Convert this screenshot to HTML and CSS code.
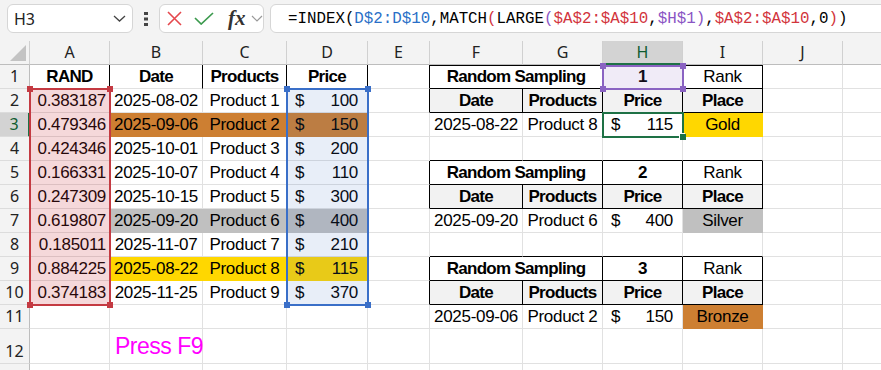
FILE: index.html
```html
<!DOCTYPE html>
<html lang="en">
<head>
    <meta charset="UTF-8">
    <title>Random Sampling</title>
    <link rel="stylesheet" href="styles.css">
</head>
<body>
    <div class="toolbar">
        <div class="namebox">
            <span>H3</span>
            <svg width="13" height="7" viewBox="0 0 13 7"><path d="M1 1l5.5 5 5.5-5" fill="none" stroke="#444" stroke-width="1.3"/></svg>
        </div>
        <div class="more">
            <svg width="4" height="14" viewBox="0 0 4 14"><rect x="0" y="0" width="4" height="3" fill="#444"/><rect x="0" y="5.5" width="4" height="3" fill="#444"/><rect x="0" y="11" width="4" height="3" fill="#444"/></svg>
        </div>
        <div class="fxbox">
            <svg class="cancel" width="15" height="15" viewBox="0 0 15 15"><path d="M1 1L14 14M14 1L1 14" stroke="#e5484d" stroke-width="1.6"/></svg>
            <svg class="enter" width="20" height="13" viewBox="0 0 20 13"><path d="M1 6L7.2 12L19 1" fill="none" stroke="#3c9a4e" stroke-width="1.7"/></svg>
            <span class="fx">fx</span>
            <svg class="fxdrop" width="12" height="7" viewBox="0 0 12 7"><path d="M1 1l5 5 5-5" fill="none" stroke="#999" stroke-width="1.2"/></svg>
        </div>
        <div class="formula">=INDEX(<span class="f-blue">D$2:D$10</span>,MATCH<span class="f-red">(</span>LARGE<span class="f-purple">(</span><span class="f-red">$A$2:$A$10</span>,<span class="f-purple">$H$1)</span>,<span class="f-red">$A$2:$A$10</span>,0<span class="f-red">)</span>)</div>
    </div>

    <div class="sheet">
        <div class="row hdr">
            <div class="c corner"><span class="tri"></span></div>
            <div class="c ch">A</div>
            <div class="c ch">B</div>
            <div class="c ch">C</div>
            <div class="c ch">D</div>
            <div class="c ch">E</div>
            <div class="c ch">F</div>
            <div class="c ch">G</div>
            <div class="c ch ch-sel">H</div>
            <div class="c ch">I</div>
            <div class="c ch">J</div>
            <div class="c ch"></div>
        </div>

        <div class="row">
            <div class="c rh">1</div>
            <div class="c ctr b bk-r">RAND</div>
            <div class="c ctr b bk-r">Date</div>
            <div class="c ctr b bk-r">Products</div>
            <div class="c ctr b bk-r">Price</div>
            <div class="c bk-r"></div>
            <div class="c ctr b span2 bk-r bk-b bk-t">Random Sampling</div>
            <div class="c ctr b bk-r bk-b bk-t">1</div>
            <div class="c ctr bk-r bk-b bk-t">Rank</div>
            <div class="c"></div>
            <div class="c"></div>
        </div>

        <div class="row">
            <div class="c rh">2</div>
            <div class="c num">0.383187</div>
            <div class="c ctr">2025-08-02</div>
            <div class="c ctr">Product 1</div>
            <div class="c acc"><span>$</span><span>100</span></div>
            <div class="c bk-r"></div>
            <div class="c ctr b th bk-r bk-b">Date</div>
            <div class="c ctr b th bk-r bk-b">Products</div>
            <div class="c ctr b th bk-r bk-b">Price</div>
            <div class="c ctr b th bk-r bk-b">Place</div>
            <div class="c"></div>
            <div class="c"></div>
        </div>

        <div class="row">
            <div class="c rh rh-sel">3</div>
            <div class="c num">0.479346</div>
            <div class="c ctr bronze">2025-09-06</div>
            <div class="c ctr bronze">Product 2</div>
            <div class="c acc bronze"><span>$</span><span>150</span></div>
            <div class="c"></div>
            <div class="c ctr">2025-08-22</div>
            <div class="c ctr">Product 8</div>
            <div class="c acc"><span>$</span><span>115</span></div>
            <div class="c ctr gold">Gold</div>
            <div class="c"></div>
            <div class="c"></div>
        </div>

        <div class="row">
            <div class="c rh">4</div>
            <div class="c num">0.424346</div>
            <div class="c ctr">2025-10-01</div>
            <div class="c ctr">Product 3</div>
            <div class="c acc"><span>$</span><span>200</span></div>
            <div class="c"></div>
            <div class="c bk-b"></div>
            <div class="c bk-b"></div>
            <div class="c bk-b"></div>
            <div class="c bk-b"></div>
            <div class="c"></div>
            <div class="c"></div>
        </div>

        <div class="row">
            <div class="c rh">5</div>
            <div class="c num">0.166331</div>
            <div class="c ctr">2025-10-07</div>
            <div class="c ctr">Product 4</div>
            <div class="c acc"><span>$</span><span>110</span></div>
            <div class="c bk-r"></div>
            <div class="c ctr b span2 bk-r bk-b">Random Sampling</div>
            <div class="c ctr b bk-r bk-b">2</div>
            <div class="c ctr bk-r bk-b">Rank</div>
            <div class="c"></div>
            <div class="c"></div>
        </div>

        <div class="row">
            <div class="c rh">6</div>
            <div class="c num">0.247309</div>
            <div class="c ctr">2025-10-15</div>
            <div class="c ctr">Product 5</div>
            <div class="c acc"><span>$</span><span>300</span></div>
            <div class="c bk-r"></div>
            <div class="c ctr b th bk-r bk-b">Date</div>
            <div class="c ctr b th bk-r bk-b">Products</div>
            <div class="c ctr b th bk-r bk-b">Price</div>
            <div class="c ctr b th bk-r bk-b">Place</div>
            <div class="c"></div>
            <div class="c"></div>
        </div>

        <div class="row">
            <div class="c rh">7</div>
            <div class="c num">0.619807</div>
            <div class="c ctr silver">2025-09-20</div>
            <div class="c ctr silver">Product 6</div>
            <div class="c acc silver"><span>$</span><span>400</span></div>
            <div class="c"></div>
            <div class="c ctr">2025-09-20</div>
            <div class="c ctr">Product 6</div>
            <div class="c acc"><span>$</span><span>400</span></div>
            <div class="c ctr silver">Silver</div>
            <div class="c"></div>
            <div class="c"></div>
        </div>

        <div class="row">
            <div class="c rh">8</div>
            <div class="c num">0.185011</div>
            <div class="c ctr">2025-11-07</div>
            <div class="c ctr">Product 7</div>
            <div class="c acc"><span>$</span><span>210</span></div>
            <div class="c"></div>
            <div class="c bk-b"></div>
            <div class="c bk-b"></div>
            <div class="c bk-b"></div>
            <div class="c bk-b"></div>
            <div class="c"></div>
            <div class="c"></div>
        </div>

        <div class="row">
            <div class="c rh">9</div>
            <div class="c num">0.884225</div>
            <div class="c ctr gold">2025-08-22</div>
            <div class="c ctr gold">Product 8</div>
            <div class="c acc gold"><span>$</span><span>115</span></div>
            <div class="c bk-r"></div>
            <div class="c ctr b span2 bk-r bk-b">Random Sampling</div>
            <div class="c ctr b bk-r bk-b">3</div>
            <div class="c ctr bk-r bk-b">Rank</div>
            <div class="c"></div>
            <div class="c"></div>
        </div>

        <div class="row">
            <div class="c rh">10</div>
            <div class="c num">0.374183</div>
            <div class="c ctr">2025-11-25</div>
            <div class="c ctr">Product 9</div>
            <div class="c acc"><span>$</span><span>370</span></div>
            <div class="c bk-r"></div>
            <div class="c ctr b th bk-r bk-b">Date</div>
            <div class="c ctr b th bk-r bk-b">Products</div>
            <div class="c ctr b th bk-r bk-b">Price</div>
            <div class="c ctr b th bk-r bk-b">Place</div>
            <div class="c"></div>
            <div class="c"></div>
        </div>

        <div class="row">
            <div class="c rh">11</div>
            <div class="c"></div>
            <div class="c"></div>
            <div class="c"></div>
            <div class="c"></div>
            <div class="c"></div>
            <div class="c ctr">2025-09-06</div>
            <div class="c ctr">Product 2</div>
            <div class="c acc"><span>$</span><span>150</span></div>
            <div class="c ctr bronze">Bronze</div>
            <div class="c"></div>
            <div class="c"></div>
        </div>

        <div class="row tall">
            <div class="c rh">12</div>
            <div class="c"></div>
            <div class="c note">Press F9</div>
            <div class="c"></div>
            <div class="c"></div>
            <div class="c"></div>
            <div class="c"></div>
            <div class="c"></div>
            <div class="c"></div>
            <div class="c"></div>
            <div class="c"></div>
            <div class="c"></div>
        </div>

        <div class="row">
            <div class="c rh"></div>
            <div class="c"></div>
            <div class="c"></div>
            <div class="c"></div>
            <div class="c"></div>
            <div class="c"></div>
            <div class="c"></div>
            <div class="c"></div>
            <div class="c"></div>
            <div class="c"></div>
            <div class="c"></div>
            <div class="c"></div>
        </div>

        <!-- reference highlights drawn over the cells -->
        <div class="ref ref-red"><i class="h tl"></i><i class="h tr"></i><i class="h bl"></i><i class="h br"></i></div>
        <div class="ref ref-blue"><i class="h tl"></i><i class="h tr"></i><i class="h bl"></i><i class="h br"></i></div>
        <div class="ref ref-purple"><i class="h tl"></i><i class="h tr"></i><i class="h bl"></i><i class="h br"></i></div>
        <div class="ref active"><i class="h br"></i></div>
    </div>
</body>
</html>
```

FILE: styles.css
```css
* {
    box-sizing: border-box;
}

body {
    margin: 0;
    width: 881px;
    height: 370px;
    overflow: hidden;
    background-color: #fff;
    font-family: "Liberation Sans", Arial, sans-serif;
    color: #000;
}

/* formula bar */
.toolbar {
    height: 41px;
    background-color: #f3f3f3;
    display: flex;
    align-items: flex-start;
    padding: 4px 0 0 7px;
    overflow: hidden;
}

.namebox,
.fxbox,
.formula {
    height: 29px;
    background-color: #fff;
    border: 1px solid #d6d6d6;
    border-radius: 6px;
    display: flex;
    align-items: center;
    flex-shrink: 0;
}

.namebox {
    width: 126px;
    justify-content: space-between;
    padding: 0 6px 0 6px;
    font-family: "Noto Sans", sans-serif;
    font-size: 16px;
    color: #222;
}

.more {
    width: 26px;
    height: 29px;
    display: flex;
    align-items: center;
    justify-content: center;
    flex-shrink: 0;
}

.fxbox {
    width: 105px;
    padding-left: 7px;
}

.fxbox .enter {
    margin-left: 12px;
}

.fx {
    margin-left: 14px;
    font-family: "Liberation Serif", serif;
    font-style: italic;
    font-weight: bold;
    font-size: 21px;
    color: #333;
    line-height: 1;
}

.fxdrop {
    margin-left: 5px;
}

.formula {
    width: 640px;
    margin-left: 6px;
    padding-left: 17px;
    font-family: "Liberation Mono", monospace;
    font-size: 15.8px;
    white-space: nowrap;
    border-top-right-radius: 0;
    border-bottom-right-radius: 0;
}

.f-blue { color: #2a6fc7; }
.f-red { color: #d2343c; }
.f-purple { color: #8a55c4; }

/* grid */
.sheet {
    position: relative;
    width: 920px;
}

.row {
    display: grid;
    grid-template-columns: 30px 80px 93px 84px 81px 62px 93px 80px 80px 80px 80px 80px;
    height: 24px;
}

.row.tall {
    height: 35px;
}

.c {
    border-right: 1px solid #e1e1e1;
    border-bottom: 1px solid #e1e1e1;
    display: flex;
    align-items: flex-end;
    padding: 0 3px 1px 3px;
    font-size: 17px;
    line-height: 21px;
    letter-spacing: -0.3px;
    white-space: nowrap;
    min-width: 0;
}

.span2 {
    grid-column: span 2;
}

.hdr .c {
    background-color: #f3f3f3;
    border-right-color: #d0d0d0;
    border-bottom-color: #bdbdbd;
}

.ch {
    justify-content: center;
    font-family: "Noto Sans", sans-serif;
    font-size: 16px;
    letter-spacing: 0;
    color: #222;
}

.ch-sel {
    background-color: #d3d3d3 !important;
    color: #0f5c30;
    border-bottom: 2px solid #1e7145 !important;
    padding-bottom: 0;
}

.corner {
    position: relative;
}

.tri {
    position: absolute;
    right: 3px;
    bottom: 3px;
    width: 0;
    height: 0;
    border-left: 16px solid transparent;
    border-bottom: 16px solid #c3c3c3;
}

.rh {
    justify-content: center;
    background-color: #f3f3f3;
    border-right-color: #bdbdbd;
    border-bottom-color: #dcdcdc;
    font-family: "Noto Sans", sans-serif;
    font-size: 16px;
    letter-spacing: 0;
    color: #222;
    padding: 0 0 1px 0;
}

.rh-sel {
    background-color: #d3d3d3;
    color: #0f5c30;
    border-right: 2px solid #1e7145;
}

.num {
    justify-content: flex-end;
}

.ctr {
    justify-content: center;
    padding-left: 0;
    padding-right: 0;
    overflow: visible;
}

.acc {
    justify-content: space-between;
    padding-left: 8px;
    padding-right: 9px;
}

.b {
    font-weight: bold;
    letter-spacing: -0.7px;
}

.th {
    background-color: #f2f2f2;
}

.bk-r {
    border-right-color: #000;
}

.bk-b {
    border-bottom-color: #000;
}

.bk-t {
    box-shadow: inset 0 1px 0 #000;
}

.gold {
    background-color: #ffd700;
    border-color: #ffd700;
}

.silver {
    background-color: #c0c0c0;
    border-color: #c0c0c0;
}

.bronze {
    background-color: #cd7f32;
    border-color: #cd7f32;
}

.note {
    overflow: visible;
    padding-left: 5px;
    padding-bottom: 2px;
    color: #ff00ff;
    font-size: 23px;
    letter-spacing: -0.5px;
    line-height: 30px;
}

/* range highlights */
.ref {
    position: absolute;
    border: 2px solid;
    pointer-events: none;
}

.ref-red {
    left: 29px;
    top: 47px;
    width: 82px;
    height: 218px;
    border-color: #c43a42;
    background-color: rgba(200, 50, 60, 0.19);
}

.ref-blue {
    left: 286px;
    top: 47px;
    width: 83px;
    height: 218px;
    border-color: #3a6fc8;
    background-color: rgba(68, 114, 196, 0.12);
}

.ref-purple {
    left: 602px;
    top: 24px;
    width: 82px;
    height: 25px;
    border-color: #8a63c2;
    background-color: rgba(140, 100, 195, 0.13);
}

.active {
    left: 602px;
    top: 71px;
    width: 82px;
    height: 26px;
    border-color: #1e7145;
}

.h {
    position: absolute;
    width: 6px;
    height: 6px;
}

.ref-red .h { background-color: #c43a42; }
.ref-blue .h { background-color: #3a6fc8; }
.ref-purple .h { background-color: #8a63c2; }
.active .h {
    background-color: #1e7145;
    box-shadow: -1px -1px 0 #fff;
}

.tl { top: -4px; left: -4px; }
.tr { top: -4px; right: -4px; }
.bl { bottom: -4px; left: -4px; }
.br { bottom: -4px; right: -4px; }
```
